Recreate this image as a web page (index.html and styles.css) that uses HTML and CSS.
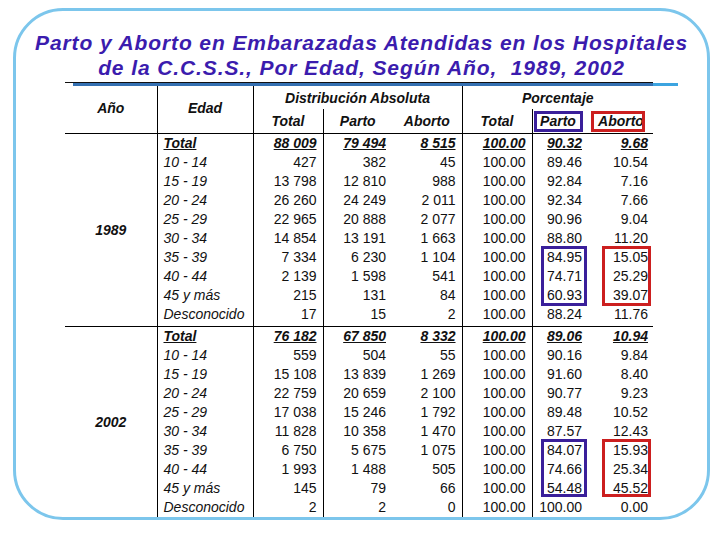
FILE: index.html
```html
<!DOCTYPE html>
<html lang="es">
<head>
<meta charset="utf-8">
<title>Parto y Aborto en Embarazadas</title>
<link rel="stylesheet" href="styles.css">
</head>
<body>
<div class="frame">
  <h1 class="title">Parto y Aborto en Embarazadas Atendidas en los Hospitales<br>de la C.C.S.S., Por Edad, Según Año,&nbsp; 1989, 2002</h1>
  <div class="rule-dark"></div>
  <div class="rule-blue"></div>
  <div class="table-wrap">
    <table>
      <colgroup>
        <col class="w-ano"><col class="w-edad"><col class="w-70"><col class="w-69"><col class="w-70"><col class="w-70"><col class="w-60"><col class="w-61">
      </colgroup>
      <thead>
        <tr class="h1">
          <th rowspan="2" class="c-ano">Año</th>
          <th rowspan="2" class="c-edad">Edad</th>
          <th colspan="3" class="c-grp">Distribución Absoluta</th>
          <th colspan="3">Porcentaje</th>
        </tr>
        <tr class="h2">
          <th>Total</th>
          <th class="sep">Parto</th>
          <th class="c-end">Aborto</th>
          <th>Total</th>
          <th class="sep box-cell"><span class="hbox hbox-p">Parto</span></th>
          <th class="box-cell"><span class="hbox hbox-r">Aborto</span></th>
        </tr>
      </thead>
      <tbody>
        <tr class="tot"><td rowspan="10" class="year">1989</td><td class="age">Total</td><td>88 009</td><td class="sep">79 494</td><td class="c-end">8 515</td><td>100.00</td><td class="sep pp">90.32</td><td>9.68</td></tr>
        <tr><td class="age">10 - 14</td><td>427</td><td class="sep">382</td><td class="c-end">45</td><td>100.00</td><td class="sep pp">89.46</td><td>10.54</td></tr>
        <tr><td class="age">15 - 19</td><td>13 798</td><td class="sep">12 810</td><td class="c-end">988</td><td>100.00</td><td class="sep pp">92.84</td><td>7.16</td></tr>
        <tr><td class="age">20 - 24</td><td>26 260</td><td class="sep">24 249</td><td class="c-end">2 011</td><td>100.00</td><td class="sep pp">92.34</td><td>7.66</td></tr>
        <tr><td class="age">25 - 29</td><td>22 965</td><td class="sep">20 888</td><td class="c-end">2 077</td><td>100.00</td><td class="sep pp">90.96</td><td>9.04</td></tr>
        <tr><td class="age">30 - 34</td><td>14 854</td><td class="sep">13 191</td><td class="c-end">1 663</td><td>100.00</td><td class="sep pp">88.80</td><td>11.20</td></tr>
        <tr><td class="age">35 - 39</td><td>7 334</td><td class="sep">6 230</td><td class="c-end">1 104</td><td>100.00</td><td class="sep pp">84.95</td><td>15.05</td></tr>
        <tr><td class="age">40 - 44</td><td>2 139</td><td class="sep">1 598</td><td class="c-end">541</td><td>100.00</td><td class="sep pp">74.71</td><td>25.29</td></tr>
        <tr><td class="age">45 y más</td><td>215</td><td class="sep">131</td><td class="c-end">84</td><td>100.00</td><td class="sep pp">60.93</td><td>39.07</td></tr>
        <tr class="last"><td class="age">Desconocido</td><td>17</td><td class="sep">15</td><td class="c-end">2</td><td>100.00</td><td class="sep pp">88.24</td><td>11.76</td></tr>
      </tbody>
      <tbody>
        <tr class="tot"><td rowspan="10" class="year year-b">2002</td><td class="age">Total</td><td>76 182</td><td class="sep">67 850</td><td class="c-end">8 332</td><td>100.00</td><td class="sep pp">89.06</td><td>10.94</td></tr>
        <tr><td class="age">10 - 14</td><td>559</td><td class="sep">504</td><td class="c-end">55</td><td>100.00</td><td class="sep pp">90.16</td><td>9.84</td></tr>
        <tr><td class="age">15 - 19</td><td>15 108</td><td class="sep">13 839</td><td class="c-end">1 269</td><td>100.00</td><td class="sep pp">91.60</td><td>8.40</td></tr>
        <tr><td class="age">20 - 24</td><td>22 759</td><td class="sep">20 659</td><td class="c-end">2 100</td><td>100.00</td><td class="sep pp">90.77</td><td>9.23</td></tr>
        <tr><td class="age">25 - 29</td><td>17 038</td><td class="sep">15 246</td><td class="c-end">1 792</td><td>100.00</td><td class="sep pp">89.48</td><td>10.52</td></tr>
        <tr><td class="age">30 - 34</td><td>11 828</td><td class="sep">10 358</td><td class="c-end">1 470</td><td>100.00</td><td class="sep pp">87.57</td><td>12.43</td></tr>
        <tr><td class="age">35 - 39</td><td>6 750</td><td class="sep">5 675</td><td class="c-end">1 075</td><td>100.00</td><td class="sep pp">84.07</td><td>15.93</td></tr>
        <tr><td class="age">40 - 44</td><td>1 993</td><td class="sep">1 488</td><td class="c-end">505</td><td>100.00</td><td class="sep pp">74.66</td><td>25.34</td></tr>
        <tr><td class="age">45 y más</td><td>145</td><td class="sep">79</td><td class="c-end">66</td><td>100.00</td><td class="sep pp">54.48</td><td>45.52</td></tr>
        <tr class="end"><td class="age">Desconocido</td><td>2</td><td class="sep">2</td><td class="c-end">0</td><td>100.00</td><td class="sep pp">100.00</td><td>0.00</td></tr>
      </tbody>
    </table>
    <div class="hl hl-p hl-a"></div>
    <div class="hl hl-r hl-a"></div>
    <div class="hl hl-p hl-b"></div>
    <div class="hl hl-r hl-b"></div>
  </div>
</div>
</body>
</html>
```
FILE: styles.css
```css
body {
  margin: 0;
  background: #fff;
  font-family: "Liberation Sans", Arial, sans-serif;
}

.frame {
  box-sizing: border-box;
  width: 697px;
  height: 512px;
  margin: 8px 0 0 13px;
  padding-top: 19px;
  border: 3px solid #7cc6ec;
  border-radius: 50px;
}

.title {
  margin: 0;
  font-size: 21px;
  line-height: 25px;
  font-weight: bold;
  font-style: italic;
  letter-spacing: 0.9px;
  color: #3b1cae;
  text-align: center;
}

.rule-dark {
  margin: 2px 0 0 49px;
  width: 588px;
  height: 1px;
  background: #111;
}

.rule-blue {
  margin-left: 57px;
  width: 605px;
  height: 3px;
  background: linear-gradient(to right, #3470b2 0, #3470b2 580px, #3ca4e0 580px);
}

.table-wrap {
  position: relative;
  margin-left: 49px;
  width: 588px;
}

table {
  border-collapse: collapse;
  table-layout: fixed;
  width: 588px;
  font-size: 14px;
  color: #111;
}

.w-ano { width: 92px; }
.w-edad { width: 96px; }
.w-70 { width: 70px; }
.w-69 { width: 69px; }
.w-60 { width: 60px; }
.w-61 { width: 61px; }

th {
  padding: 0;
  font-weight: bold;
  font-style: italic;
  text-align: center;
  white-space: nowrap;
}

.h1 th { height: 23px; }
.h2 th { height: 24px; border-bottom: 1px solid #000; }
.c-ano, .c-edad { padding-bottom: 3px; }

.c-ano, .c-edad { border-bottom: 1px solid #000; border-right: 1px solid #000; }
.c-grp { border-right: 1px solid #000; }

td {
  height: 19px;
  padding: 0 6px 0 0;
  line-height: 19px;
  text-align: right;
  white-space: nowrap;
}

td.pp { padding-right: 10px; }
td:last-child { padding-right: 5px; }

td.age {
  padding-left: 6px;
  text-align: left;
  font-style: italic;
  border-right: 1px solid #000;
}

td.year {
  padding: 0;
  text-align: center;
  font-weight: bold;
  font-style: italic;
  border-right: 1px solid #000;
  border-bottom: 1px solid #000;
}

td.year-b { border-bottom: 0; }

.sep { border-left: 1px solid #000; }
.c-end { border-right: 1px solid #000; }

.tot td {
  font-weight: bold;
  font-style: italic;
  text-decoration: underline;
}
.tot td.year { text-decoration: none; }

.last td {
  height: 21px;
  vertical-align: top;
  border-bottom: 1px solid #000;
}

.end td {
  height: 17px;
  vertical-align: top;
}

.box-cell { text-align: left; vertical-align: middle; }

.hbox {
  display: inline-block;
  box-sizing: border-box;
  height: 21px;
  line-height: 15px;
  border: 3px solid;
  vertical-align: middle;
  white-space: nowrap;
}

.hbox-p {
  width: 49px;
  margin-left: 1px;
  border-color: #3a1f9a;
  text-align: center;
}

.hbox-r {
  width: 54px;
  margin-left: -1px;
  padding-left: 4px;
  border-color: #cc1f1f;
  overflow: hidden;
}

.hl {
  position: absolute;
  box-sizing: border-box;
  border: 3px solid;
}
.hl-p { left: 476px; width: 46px; border-color: #3a1f9a; }
.hl-r { left: 537px; width: 49px; border-color: #cc1f1f; }
.hl-a { top: 160px; height: 60px; }
.hl-b { top: 353px; height: 58px; }
```
